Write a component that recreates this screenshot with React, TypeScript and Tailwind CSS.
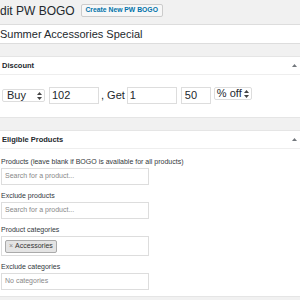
import React from 'react';

const font = { fontFamily: '"Liberation Sans", Arial, sans-serif' };

function UpDown() {
  return (
    <svg className="h-[8px] w-[5px] flex-shrink-0 text-[#444]" viewBox="0 0 5 8" fill="currentColor" aria-hidden>
      <path d="M2.5 0L5 3H0z" />
      <path d="M2.5 8L0 5h5z" />
    </svg>
  );
}

function Toggle() {
  return (
    <svg className="h-[3px] w-[5px] text-[#72777c]" viewBox="0 0 5 3" fill="currentColor" aria-hidden>
      <path d="M2.5 0L5 3H0z" />
    </svg>
  );
}

function BoxHeader({ title }: { title: string }) {
  return (
    <div className="flex h-[18px] items-center justify-between border-b border-[#eee] pl-[2px] pr-[3px]">
      <span className="text-[7.5px] font-bold text-[#23282d]">{title}</span>
      <Toggle />
    </div>
  );
}

function Field({ label, children, tall }: { label: string; children: React.ReactNode; tall?: boolean }) {
  return (
    <div className="flex flex-col">
      <span className="h-[13px] pl-[1px] text-[7px] leading-[13px] text-[#32373c]">{label}</span>
      <div
        className={`ml-[1px] flex w-[148px] items-center border border-[#ddd] bg-white px-[3px] ${tall ? 'h-[20px]' : 'h-[17px]'}`}
      >
        {children}
      </div>
    </div>
  );
}

export default function App() {
  return (
    <div className="h-[300px] w-[300px] overflow-hidden bg-[#f1f1f1] text-[#23282d]" style={font}>
      <div className="flex h-[20px] items-center gap-[6px] pt-[1px]">
        <h1 className="text-[12px] leading-none text-[#23282d]">dit PW BOGO</h1>
        <button className="h-[13px] w-[82px] rounded-[2px] border border-[#ccc] bg-[#f7f7f7] text-[6.8px] font-bold leading-none text-[#0073aa]">
          Create New PW BOGO
        </button>
      </div>

      <div className="mt-[4px] flex h-[20px] items-center border-y border-[#ddd] bg-white">
        <span className="text-[11px] leading-none">Summer Accessories Special</span>
      </div>

      <div className="mt-[12px] h-[62px] border-y border-[#e5e5e5] bg-white">
        <BoxHeader title="Discount" />
        <div className="flex items-center pl-[2px] pt-[12px] text-[11px]">
          <div className="flex h-[13px] w-[43px] items-center justify-between rounded-[2px] border border-[#ddd] bg-white pl-[4px] pr-[2px] leading-none">
            <span>Buy</span>
            <UpDown />
          </div>
          <div className="ml-[4px] flex h-[17px] w-[50px] items-center border border-[#ddd] px-[2px] leading-none">102</div>
          <span className="ml-[2px] leading-none">, Get</span>
          <div className="ml-[2px] flex h-[17px] w-[50px] items-center border border-[#ddd] px-[2px] leading-none">1</div>
          <div className="ml-[4px] flex h-[17px] w-[30px] items-center border border-[#ddd] px-[3px] leading-none">50</div>
          <div className="ml-[3px] flex h-[13px] w-[38px] items-center justify-between self-start rounded-[2px] border border-[#ddd] pl-[2px] pr-[2px] leading-none">
            <span>% off</span>
            <UpDown />
          </div>
        </div>
      </div>

      <div className="mt-[12px] h-[167px] border-y border-[#e5e5e5] bg-white">
        <BoxHeader title="Eligible Products" />
        <div className="flex flex-col gap-[4px] pt-[6px]">
          <Field label="Products (leave blank if BOGO is available for all products)">
            <span className="text-[7px] text-[#888]">Search for a product...</span>
          </Field>
          <Field label="Exclude products">
            <span className="text-[7px] text-[#888]">Search for a product...</span>
          </Field>
          <Field label="Product categories" tall>
            <span className="flex h-[13px] items-center rounded-[2px] border border-[#aaa] bg-[#e4e4e4] px-[3px] text-[7px] text-[#333]">
              <span className="mr-[2px] text-[#888]">×</span>Accessories
            </span>
          </Field>
          <Field label="Exclude categories">
            <span className="text-[7px] text-[#888]">No categories</span>
          </Field>
        </div>
      </div>
    </div>
  );
}
